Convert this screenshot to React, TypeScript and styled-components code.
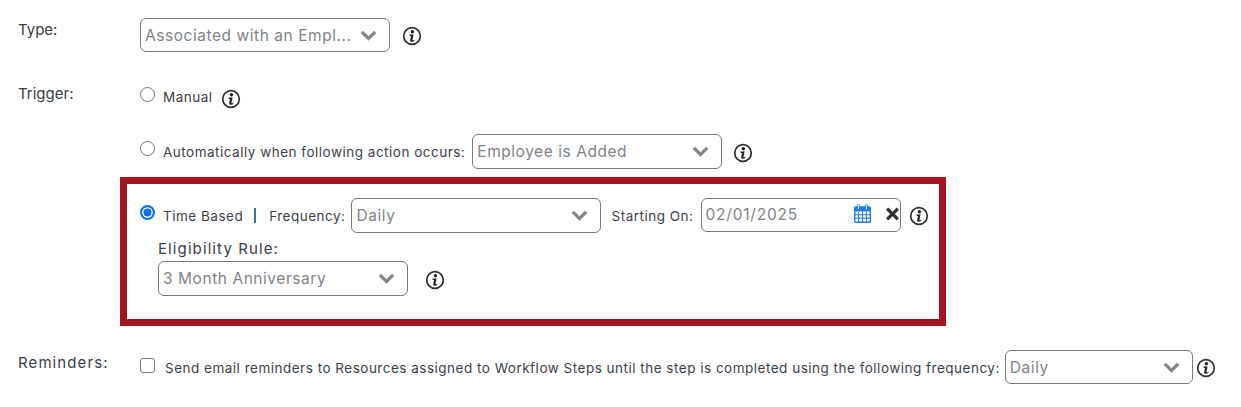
import styled, { createGlobalStyle } from "styled-components";
import { FaTimes } from "react-icons/fa";

const GlobalStyle = createGlobalStyle`
	html, body {
		margin: 0;
		padding: 0;
		background: #fff;
		font-family: Inter, "Open Sans", "Liberation Sans", sans-serif;
		color: #3b3f4a;
	}
`;

function InfoIcon() {
	return (
		<InfoWrap viewBox="0 0 20 20" width="20" height="20">
			<circle cx="10" cy="10" r="8.3" fill="none" stroke="#2f2f2f" strokeWidth="1.7" />
			<circle cx="10.4" cy="5.8" r="1.7" fill="#222" />
			<path
				d="M7.6 8.6 L11.6 8.4 L10.5 13.6 Q10.4 14.4 11 14.3 L12.4 14.1 L12.4 15.1 Q10.6 15.9 9 15.7 Q7.9 15.5 8.2 14.1 L9 10.1 L7.6 9.9 Z"
				fill="#222"
			/>
		</InfoWrap>
	);
}

function CalendarIcon() {
	return (
		<svg viewBox="0 0 17 19" width="17" height="19">
			<rect x="0.7" y="3" width="15.6" height="15.3" rx="1" fill="#fff" stroke="#1a7cf2" strokeWidth="1.4" />
			<rect x="0.7" y="3" width="15.6" height="4.4" fill="#1a7cf2" />
			<rect x="3.4" y="0.6" width="2.2" height="4.8" rx="1" fill="#fff" stroke="#1a7cf2" strokeWidth="1" />
			<rect x="11.4" y="0.6" width="2.2" height="4.8" rx="1" fill="#fff" stroke="#1a7cf2" strokeWidth="1" />
			<path
				d="M4.6 7.4V18M8.5 7.4V18M12.4 7.4V18M1 10.7H16M1 14.2H16"
				stroke="#1a7cf2"
				strokeWidth="1"
				fill="none"
			/>
		</svg>
	);
}

function Chevron() {
	return (
		<ChevronWrap viewBox="0 0 17 11" width="17" height="11">
			<path d="M1.8 1.8 L8.5 8.4 L15.2 1.8" fill="none" stroke="#858585" strokeWidth="3.2" />
		</ChevronWrap>
	);
}

function Select({ value, width, height = 35 }: { value: string; width: number; height?: number }) {
	return (
		<SelectBox $width={width} $height={height}>
			<SelectValue>{value}</SelectValue>
			<Chevron />
		</SelectBox>
	);
}

export default function App() {
	return (
		<Page>
			<GlobalStyle />
			<TypeRow>
				<FieldLabel>Type:</FieldLabel>
				<Select value="Associated with an Empl..." width={250} height={34} />
				<InfoGap $left={12}>
					<InfoIcon />
				</InfoGap>
			</TypeRow>

			<ManualRow>
				<TriggerLabel>Trigger:</TriggerLabel>
				<ManualRadio />
				<ManualText>Manual</ManualText>
				<InfoGap $left={8}>
					<InfoIcon />
				</InfoGap>
			</ManualRow>

			<AutoRow>
				<Radio />
				<OptionText>Automatically when following action occurs:</OptionText>
				<Spacer $width={7} />
				<Select value="Employee is Added" width={250} />
				<InfoGap $left={11}>
					<InfoIcon />
				</InfoGap>
			</AutoRow>

			<Highlight>
				<TimeRow>
					<Radio $checked />
					<OptionText>Time Based</OptionText>
					<Divider />
					<OptionText>Frequency:</OptionText>
					<Spacer $width={6} />
					<Select value="Daily" width={250} />
					<Spacer $width={10} />
					<OptionText>Starting On:</OptionText>
					<Spacer $width={8} />
					<DateBox>
						<DateValue>02/01/2025</DateValue>
						<CalendarSlot>
							<CalendarIcon />
						</CalendarSlot>
						<ClearIcon />
					</DateBox>
					<TimeInfo $left={8}>
						<InfoIcon />
					</TimeInfo>
				</TimeRow>
				<RuleLabel>Eligibility Rule:</RuleLabel>
				<RuleRow>
					<Select value="3 Month Anniversary" width={250} />
					<InfoGap $left={17}>
						<InfoIcon />
					</InfoGap>
				</RuleRow>
			</Highlight>

			<ReminderRow>
				<ReminderLabel>Reminders:</ReminderLabel>
				<Checkbox />
				<ReminderText>
					Send email reminders to Resources assigned to Workflow Steps until the step is completed using the following frequency:
				</ReminderText>
				<Spacer $width={5} />
				<Select value="Daily" width={188} height={34} />
				<InfoGap $left={3}>
					<InfoIcon />
				</InfoGap>
			</ReminderRow>
		</Page>
	);
}

const Page = styled.div`
	width: 1241px;
	height: 407px;
	padding-top: 18px;
	box-sizing: border-box;
	overflow: hidden;
`;

const Row = styled.div`
	display: flex;
	align-items: center;
`;

const TypeRow = styled(Row)`
	height: 34px;
`;

const ManualRow = styled(Row)`
	height: 30px;
	margin-top: 31px;
`;

const AutoRow = styled(Row)`
	height: 35px;
	margin-top: 21px;
	padding-left: 140px;
`;

const FieldLabel = styled.div`
	box-sizing: border-box;
	width: 140px;
	padding-left: 18px;
	font-size: 15px;
	line-height: 20px;
	color: #3a3d45;
	align-self: flex-start;
	margin-top: 2px;
`;

const TriggerLabel = styled(FieldLabel)`
	margin-top: 1px;
`;

const ReminderLabel = styled(FieldLabel)`
	margin-top: 3px;
	letter-spacing: 1.1px;
`;

const SelectBox = styled.div<{ $width: number; $height: number }>`
	box-sizing: border-box;
	flex: none;
	width: ${(p) => p.$width}px;
	height: ${(p) => p.$height}px;
	display: flex;
	align-items: center;
	justify-content: space-between;
	padding: 0 12px 0 4px;
	border: 1px solid #7a7a7a;
	border-radius: 6px;
	background: #fff;
`;

const SelectValue = styled.span`
	font-size: 15.5px;
	letter-spacing: 0.55px;
	color: #7f8388;
	white-space: nowrap;
`;

const ChevronWrap = styled.svg`
	display: block;
	flex: none;
`;

const InfoWrap = styled.svg`
	display: block;
`;

const InfoGap = styled.div<{ $left: number }>`
	margin-left: ${(p) => p.$left}px;
	margin-top: 2px;
	flex: none;
`;

const TimeInfo = styled(InfoGap)`
	margin-top: 0;
`;

const Spacer = styled.div<{ $width: number }>`
	width: ${(p) => p.$width}px;
	flex: none;
`;

const Radio = styled.span<{ $checked?: boolean }>`
	box-sizing: border-box;
	flex: none;
	width: 15px;
	height: 15px;
	margin-right: 8px;
	margin-top: -6px;
	border-radius: 50%;
	background: ${(p) => (p.$checked ? "#0d6efd" : "#fff")};
	border: ${(p) => (p.$checked ? "2px solid #0d6efd" : "1px solid #767676")};
	box-shadow: ${(p) => (p.$checked ? "inset 0 0 0 1.5px #fff" : "none")};
`;

const ManualRadio = styled(Radio)`
	margin-top: -8px;
`;

const OptionText = styled.span`
	font-size: 13.5px;
	letter-spacing: 0.5px;
	line-height: 18px;
	color: #3b3f4a;
	white-space: nowrap;
	margin-top: 1px;
`;

const ManualText = styled(OptionText)`
	margin-top: -2px;
`;

const Highlight = styled.div`
	box-sizing: border-box;
	width: 826px;
	height: 149px;
	margin-top: 8px;
	margin-left: 120px;
	padding: 14px 0 0 13px;
	border: 7px solid #a3161f;
`;

const TimeRow = styled(Row)`
	height: 35px;
`;

const Divider = styled.span`
	width: 2px;
	height: 15px;
	margin: 0 13px 0 11px;
	background: #3f6f9f;
	flex: none;
`;

const DateBox = styled.div`
	box-sizing: border-box;
	flex: none;
	position: relative;
	display: flex;
	align-items: center;
	width: 200px;
	height: 34px;
	margin-top: -1px;
	padding-left: 3px;
	border: 1px solid #7a7a7a;
	border-radius: 6px;
`;

const DateValue = styled.span`
	font-size: 15.5px;
	letter-spacing: 0.8px;
	color: #7f8388;
	margin-top: -2px;
`;

const CalendarSlot = styled.div`
	position: absolute;
	left: 152px;
	top: 5px;
	line-height: 0;
`;

const ClearIcon = styled(FaTimes)`
	position: absolute;
	right: 0;
	top: 6px;
	width: 15px;
	height: 18px;
	color: #333;
`;

const RuleLabel = styled.div`
	margin: 6px 0 0 18px;
	font-size: 15px;
	letter-spacing: 1.1px;
	line-height: 20px;
	color: #3a3d45;
`;

const RuleRow = styled(Row)`
	margin: 2px 0 0 18px;
	height: 35px;
`;

const ReminderRow = styled(Row)`
	margin-top: 24px;
	height: 34px;
`;

const Checkbox = styled.span`
	box-sizing: border-box;
	flex: none;
	width: 15px;
	height: 15px;
	margin-right: 10px;
	margin-top: -4px;
	border: 1px solid #767676;
	border-radius: 3px;
`;

const ReminderText = styled(OptionText)`
	margin-top: 2px;
`;
